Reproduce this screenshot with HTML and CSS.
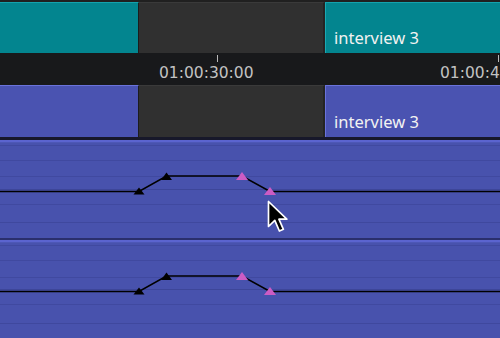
FILE: index.html
```html
<!DOCTYPE html>
<html>
<head>
<meta charset="utf-8">
<link rel="stylesheet" href="styles.css">
</head>
<body>
<div class="timeline">
  <div class="track track-video">
    <div class="clip clip-teal clip-left"></div>
    <div class="gap"></div>
    <div class="clip clip-teal clip-right"><span class="clip-name">interview 3</span></div>
  </div>
  <div class="ruler">
    <div class="mark mark-1"><span class="tick"></span><span class="tc">01:00:30:00</span></div>
    <div class="mark mark-2"><span class="tick"></span><span class="tc">01:00:40:00</span></div>
  </div>
  <div class="track track-audio">
    <div class="clip clip-blue clip-left"></div>
    <div class="gap"></div>
    <div class="clip clip-blue clip-right"><span class="clip-name">interview 3</span></div>
  </div>
  <div class="sep"></div>
  <div class="lane">
    <svg class="lane-svg" width="500" height="98" viewBox="0 0 500 98">
      <rect x="0" y="0" width="500" height="2" fill="#5b64cf"/>
      <rect x="0" y="2" width="500" height="1" fill="#4d57b6"/>
      <rect x="0" y="5" width="500" height="1" fill="#4049a0"/>
      <rect x="0" y="20" width="500" height="1" fill="#4049a0"/>
      <rect x="0" y="36" width="500" height="1" fill="#4049a0"/>
      <rect x="0" y="49" width="500" height="1" fill="#3d4699"/>
      <rect x="0" y="64" width="500" height="1" fill="#4049a0"/>
      <rect x="0" y="82" width="500" height="1" fill="#3f489e"/>
      <polyline points="0,51.5 139,51.5 166.5,36 242,36 270,51.5 500,51.5" fill="none" stroke="#000" stroke-width="1.6"/>
      <polygon points="139,47.5 144.5,54.5 133.5,54.5" fill="#000"/>
      <polygon points="166.5,32.5 172,40 161,40" fill="#000"/>
      <polygon points="242,32 248,40 236,40" fill="#cc5cc4"/>
      <polygon points="270,47 276,55 264,55" fill="#cc5cc4"/>
    </svg>
    <svg class="cursor" width="22" height="36" viewBox="0 0 22 36">
      <path d="M1.5 1.5 L1.5 26.5 L7.8 20.3 L12.4 31 L16.4 29.3 L11.9 19.2 L19.8 19.2 Z" fill="#000" stroke="#fff" stroke-width="1.7" stroke-linejoin="round"/>
    </svg>
  </div>
  <div class="lane-sep"></div>
  <div class="lane">
    <svg class="lane-svg" width="500" height="98" viewBox="0 0 500 98">
      <rect x="0" y="0" width="500" height="2" fill="#5b64cf"/>
      <rect x="0" y="2" width="500" height="1" fill="#4d57b6"/>
      <rect x="0" y="5" width="500" height="1" fill="#4049a0"/>
      <rect x="0" y="20" width="500" height="1" fill="#4049a0"/>
      <rect x="0" y="37" width="500" height="1" fill="#4049a0"/>
      <rect x="0" y="49" width="500" height="1" fill="#3d4699"/>
      <rect x="0" y="64" width="500" height="1" fill="#4049a0"/>
      <rect x="0" y="83" width="500" height="1" fill="#3f489e"/>
      <polyline points="0,51.5 139,51.5 166.5,36 242,36 270,51.5 500,51.5" fill="none" stroke="#000" stroke-width="1.6"/>
      <polygon points="139,47.5 144.5,54.5 133.5,54.5" fill="#000"/>
      <polygon points="166.5,32.5 172,40 161,40" fill="#000"/>
      <polygon points="242,32 248,40 236,40" fill="#cc5cc4"/>
      <polygon points="270,47 276,55 264,55" fill="#cc5cc4"/>
    </svg>
  </div>
</div>
</body>
</html>
```

FILE: styles.css
```css
html, body {
  margin: 0;
  padding: 0;
  background: #202020;
  overflow: hidden;
}
.timeline {
  width: 500px;
  height: 338px;
  display: flex;
  flex-direction: column;
  padding-top: 2px;
  box-sizing: border-box;
  font-family: "DejaVu Sans", "Noto Sans", sans-serif;
  overflow: hidden;
}
.track {
  display: flex;
  flex: none;
}
.track-video {
  height: 51px;
}
.track-audio {
  height: 52px;
}
.clip {
  box-sizing: border-box;
  position: relative;
  display: flex;
  align-items: flex-end;
}
.clip-left {
  width: 139px;
  border-right: 1px solid #1c1c1c;
}
.clip-right {
  flex: 1;
  padding: 0 0 6px 8px;
}
.clip-teal {
  background: #03858f;
  border-top: 1px solid #14a3ad;
}
.clip-teal.clip-right {
  border-left: 1px solid #1aa9b3;
}
.clip-blue {
  background: #4a53b1;
  border-top: 1px solid #6a73db;
}
.clip-blue.clip-right {
  border-left: 1px solid #6a73db;
}
.gap {
  width: 186px;
  background: #303030;
  border-top: 1px solid #3a3a3a;
  border-right: 2px solid #242424;
  box-sizing: border-box;
}
.clip-name {
  color: #f2f2f2;
  font-family: "Noto Sans", "DejaVu Sans", sans-serif;
  font-size: 16.5px;
  line-height: 18px;
  white-space: nowrap;
}
.ruler {
  height: 32px;
  flex: none;
  background: #18191b;
  position: relative;
  overflow: hidden;
}
.mark {
  position: absolute;
  top: 0;
  height: 32px;
}
.mark-1 { left: 159px; }
.mark-2 { left: 440px; }
.tick {
  position: absolute;
  left: 58px;
  top: 2px;
  width: 1px;
  height: 7px;
  background: #b8b8b8;
}
.tc {
  position: absolute;
  left: 0;
  top: 11px;
  color: #c2c2c2;
  font-size: 15.5px;
  line-height: 18px;
  white-space: nowrap;
}
.sep {
  height: 3px;
  flex: none;
  background: #17182a;
}
.lane {
  height: 98px;
  flex: none;
  background: #4852ad;
  position: relative;
}
.lane-svg {
  display: block;
}
.lane-sep {
  height: 2px;
  flex: none;
  background: #2a2f6c;
}
.cursor {
  position: absolute;
  left: 267px;
  top: 60px;
}
```
